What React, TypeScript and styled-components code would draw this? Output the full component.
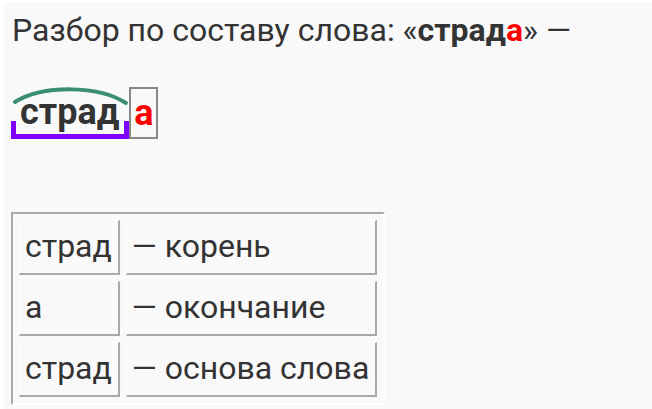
import styled, { createGlobalStyle } from "styled-components";

const Global = createGlobalStyle`
  html, body {
    margin: 0;
    padding: 0;
    background: #ffffff;
  }
  body {
    font-family: Roboto, "Liberation Sans", Arial, sans-serif;
    color: #333333;
  }
`;

const Page = styled.div`
  margin: 2px 0 0 4px;
  height: 407px;
  background: #f9f9f9;
  padding: 9px 0 0 8px;
  box-sizing: border-box;
  overflow: hidden;
`;

const Title = styled.p`
  margin: 0;
  font-size: 32px;
  line-height: 38px;
  white-space: nowrap;
`;

const Bold = styled.b`
  font-weight: 700;
`;

const Red = styled.span`
  color: #ff0000;
`;

const Word = styled.div`
  display: flex;
  align-items: flex-end;
  margin: 38px 0 0 -1px;
  font-size: 36px;
  font-weight: 700;
`;

const Root = styled.span`
  position: relative;
  display: inline-block;
  padding: 0 10px 9px 9px;
  line-height: 36px;
`;

const Arc = styled.svg`
  position: absolute;
  left: 2px;
  top: -9px;
  width: 116px;
  height: 20px;
  overflow: visible;
`;

const Bracket = styled.span`
  position: absolute;
  left: 0;
  right: 0;
  bottom: 0;
  height: 18px;
  border: 5px solid #7f00ff;
  border-top: none;
  box-sizing: border-box;
`;

const Ending = styled.span`
  display: inline-block;
  padding: 0 2px 0 3px;
  border: 2px solid #888888;
  color: #ff0000;
  line-height: 48px;
`;

const Table = styled.table`
  margin: 73px 0 0 -1px;
  border-collapse: separate;
  border-spacing: 6px 6px;
  border-style: solid;
  border-width: 2px;
  border-color: #a9a9a9 #ffffff #ffffff #a9a9a9;
  font-size: 32px;
`;

const Cell = styled.td`
  padding: 6px 6px 8px 5px;
  border-style: solid;
  border-width: 1px 2px 2px 1px;
  border-color: #ffffff #a9a9a9 #a9a9a9 #ffffff;
  line-height: 38px;
  white-space: nowrap;
`;

const rows = [
  ["страд", "— корень"],
  ["а", "— окончание"],
  ["страд", "— основа слова"],
];

export default function App() {
  return (
    <>
      <Global />
      <Page>
        <Title>
          Разбор по составу слова: «
          <Bold>
            страд<Red>а</Red>
          </Bold>
          » —
        </Title>
        <Word>
          <Root>
            <Arc viewBox="0 0 116 20">
              <path
                d="M2 17 C30 0 85 0 113 18"
                fill="none"
                stroke="#3a8f6e"
                strokeWidth="4"
                strokeLinecap="round"
              />
            </Arc>
            страд
            <Bracket />
          </Root>
          <Ending>а</Ending>
        </Word>
        <Table>
          <tbody>
            {rows.map(([part, label], i) => (
              <tr key={i}>
                <Cell>{part}</Cell>
                <Cell>{label}</Cell>
              </tr>
            ))}
          </tbody>
        </Table>
      </Page>
    </>
  );
}
